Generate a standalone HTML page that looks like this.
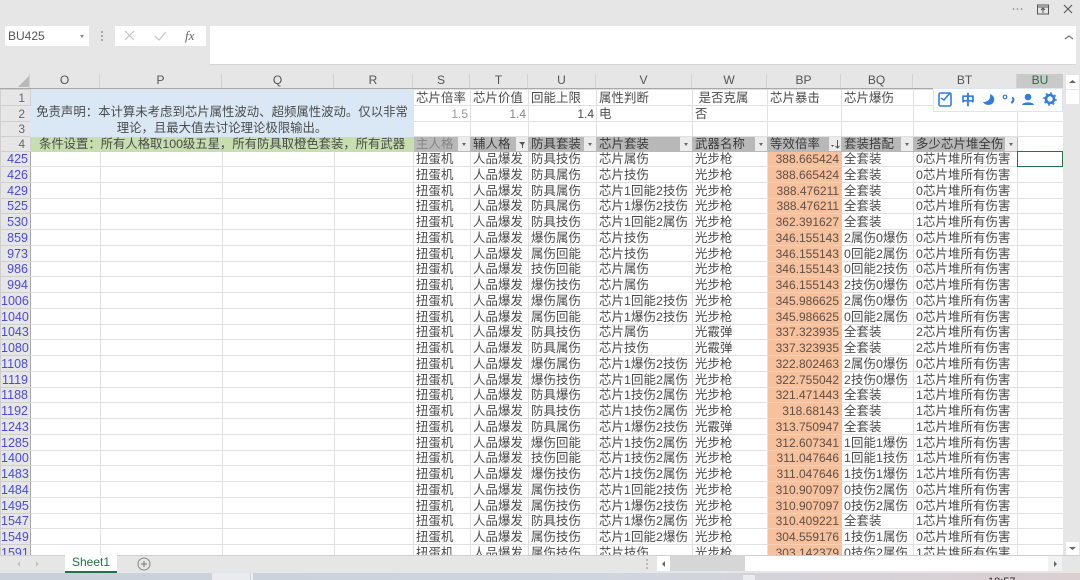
<!DOCTYPE html>
<html lang="zh"><head><meta charset="utf-8"><title>Sheet1</title>
<style>
html,body{margin:0;padding:0;width:1080px;height:580px;overflow:hidden;background:#fff}
body{position:relative;font-family:"Liberation Sans","Noto Sans CJK SC",sans-serif;color:#4a4a4a}
.a{position:absolute}
#top{left:0;top:0;width:1080px;height:74px;background:#e6e6e6}
#ch{left:0;top:74px;width:1063px;height:14px;background:#e6e6e6;border-bottom:1px solid #a8a8a8}
.c{position:absolute;top:0;height:14px;line-height:13px;font-size:12px;text-align:center;color:#555;border-right:1px solid #d2d2d2;box-sizing:border-box}
#wrap{left:0;top:89px;width:1063px;height:466px;overflow:hidden;background:#fff}
table{border-collapse:collapse;table-layout:fixed;width:1063px;font-size:12.4px;color:#4a4a4a}
td{height:16px;padding:1px 0 0 2px;box-sizing:border-box;border:1px solid #e0e0e0;white-space:nowrap;overflow:hidden;line-height:13px;position:relative;letter-spacing:.1px}
tr:nth-child(3) td,tr:nth-child(4) td,tr:nth-child(5) td,tr:nth-child(8) td,tr:nth-child(12) td,tr:nth-child(16) td,tr:nth-child(20) td,tr:nth-child(24) td,tr:nth-child(28) td{height:15px}
td.r{text-align:right;padding:1px 2px 0 0;font-size:12px;letter-spacing:0}
td.h{background:#e6e6e6;color:#666;text-align:right;padding:1px 5px 0 0;font-size:12px;letter-spacing:0;border-color:#cfcfcf}
td.b{color:#4b4bd6;padding:1px 2px 0 0;font-size:12.5px;border-right:1px solid #a8a8a8}
td.o{background:#f6c19c;text-align:right;padding:1px 2px 0 0;font-size:12px;letter-spacing:0;color:#5f5048;border-color:#f6c19c;border-top-color:#f8cfb2;border-bottom-color:#f8cfb2}
td.g{background:#b8b8b8;color:#3a3a3a;border-color:#b8b8b8}
.f{position:absolute;right:0;top:0;width:12px;height:14px;background:#ececec}
.f:after{content:"";position:absolute;left:4px;top:6px;border:2px solid transparent;border-top:3px solid #666;border-bottom:0}
.f.n:after{display:none}
.f svg{position:absolute;left:0;top:0}
#sel{left:1017px;top:151px;width:46px;height:16px;border:1.5px solid #217346;box-sizing:border-box}
#bu{left:1017px;top:74px;width:46px;height:15px;background:#c9c9c9;border-bottom:1px solid #217346;font-size:12px;line-height:13px;text-align:center;color:#2d6b49;box-sizing:border-box}
#bot{left:0;top:555px;width:1080px;height:18px;background:#e6e6e6;border-top:1px solid #d0d0d0;box-sizing:border-box}
#task{left:0;top:573px;width:1080px;height:7px;background:linear-gradient(90deg,#c9d0da 0,#cfd5df 55%,#d8d1d6 85%,#dccfd2 100%);overflow:hidden}
#ime{left:933px;top:88px;width:130px;height:24px;background:#fff;border:1px solid #dbe6f5;box-sizing:border-box}
</style></head><body>
<div class="a" id="top"></div>
<svg class="a" style="left:1008px;top:0" width="72" height="18" viewBox="0 0 72 18"><g fill="#777"><circle cx="5.500" cy="9" r=".8"/><circle cx="9.500" cy="9" r=".8"/><circle cx="13.500" cy="9" r=".8"/></g><g fill="none" stroke="#555"><rect x="29.500" y="5" width="11" height="9"/><path d="M29.500 7h11M35 13V8.500M33 10l2-2 2 2"/><path d="M56 5l8 8M64 5l-8 8" stroke-width="1.100"/></g></svg>
<div class="a" style="left:5px;top:26px;width:84px;height:20px;background:#fff;font-size:12px;line-height:20px;padding-left:3px;box-sizing:border-box;color:#555">BU425</div>
<div class="a" style="left:80px;top:35px;border:2px solid transparent;border-top:3px solid #888"></div>
<div class="a" style="left:101px;top:31px;width:1px;height:10px;border-left:2px dotted #aaa"></div>
<div class="a" style="left:115px;top:26px;width:91px;height:20px;background:#fff"></div>
<svg class="a" style="left:115px;top:26px" width="91" height="20" viewBox="0 0 91 20"><path d="M10 5l9 9M19 5l-9 9" stroke="#c4c4c4" fill="none" stroke-width="1.200"/><path d="M40 10l4 4 7-8" stroke="#c4c4c4" fill="none" stroke-width="1.200"/><text x="70" y="14" font-family="Liberation Serif" font-style="italic" font-size="13" fill="#666">fx</text></svg>
<div class="a" style="left:210px;top:26px;width:866px;height:39px;background:#fff;border-bottom:1px solid #d4d4d4;box-sizing:border-box"></div>
<svg class="a" style="left:1064px;top:33px" width="10" height="8"><path d="M1 6l4-3 4 3" fill="none" stroke="#777" stroke-width="1.300"/></svg>

<div class="a" id="ch">
<div class="c" style="left:0;width:30px"></div>
<svg class="a" style="left:17px;top:0" width="13" height="14"><path d="M12 2v11H1z" fill="#b9b9b9"/></svg>
<div class="c" style="left:30px;width:70px">O</div><div class="c" style="left:100px;width:122px">P</div><div class="c" style="left:222px;width:112px">Q</div><div class="c" style="left:334px;width:79px">R</div><div class="c" style="left:413px;width:57px">S</div><div class="c" style="left:470px;width:58px">T</div><div class="c" style="left:528px;width:68px">U</div><div class="c" style="left:596px;width:96px">V</div><div class="c" style="left:692px;width:75px">W</div><div class="c" style="left:767px;width:74px">BP</div><div class="c" style="left:841px;width:72px">BQ</div><div class="c" style="left:913px;width:104px">BT</div>
</div>
<div class="a" id="bu">BU</div>

<div class="a" id="wrap"><table>
<colgroup><col style="width:30px"><col style="width:70px"><col style="width:122px"><col style="width:112px"><col style="width:79px"><col style="width:57px"><col style="width:58px"><col style="width:68px"><col style="width:96px"><col style="width:75px"><col style="width:74px"><col style="width:72px"><col style="width:104px"><col style="width:46px"></colgroup>
<tr><td class="h">1</td><td colspan="4" rowspan="3" style="background:#dae8f5;text-align:center;vertical-align:bottom;padding:0 0 0 0;line-height:15.500px;letter-spacing:0;border-color:#dae8f5">免责声明：本计算未考虑到芯片属性波动、超频属性波动。仅以非常<br>理论，且最大值去讨论理论极限输出。</td><td>芯片倍率</td><td>芯片价值</td><td>回能上限</td><td>属性判断</td><td>&nbsp;是否克属</td><td>芯片暴击</td><td>芯片爆伤</td><td></td><td></td></tr>
<tr><td class="h">2</td><td class="r" style="color:#999">1.5</td><td class="r" style="color:#888">1.4</td><td class="r">1.4</td><td>电</td><td>否</td><td></td><td></td><td></td><td></td></tr>
<tr><td class="h">3</td><td></td><td></td><td></td><td></td><td></td><td></td><td></td><td></td><td></td></tr>
<tr><td class="h">4</td><td colspan="4" style="background:#c6deb0;text-align:center;padding:1px 0 0 0;letter-spacing:-.05px;border-color:#c6deb0">条件设置：所有人格取100级五星，所有防具取橙色套装，所有武器</td><td class="g" style="color:#858585">主人格<i class="f"></i></td><td class="g">辅人格<i class="f n"><svg width="12" height="14"><path d="M3 5h6L7 8v3l-1 0V8z" fill="#555"/></svg></i></td><td class="g">防具套装<i class="f"></i></td><td class="g">芯片套装<i class="f"></i></td><td class="g">武器名称<i class="f"></i></td><td class="g">等效倍率<i class="f n"><svg width="12" height="14"><path d="M2 8l1.500 2L5 8z" fill="#555"/><path d="M8.500 3v8M6.500 9l2 2 2-2" fill="none" stroke="#555"/></svg></i></td><td class="g">套装搭配<i class="f"></i></td><td class="g">多少芯片堆全伤<i class="f"></i></td><td></td></tr>
<tr><td class="h b">425</td><td></td><td></td><td></td><td></td><td>扭蛋机</td><td>人品爆发</td><td>防具技伤</td><td>芯片属伤</td><td>光步枪</td><td class="o">388.665424</td><td>全套装</td><td>0芯片堆所有伤害</td><td></td></tr>
<tr><td class="h b">426</td><td></td><td></td><td></td><td></td><td>扭蛋机</td><td>人品爆发</td><td>防具属伤</td><td>芯片技伤</td><td>光步枪</td><td class="o">388.665424</td><td>全套装</td><td>0芯片堆所有伤害</td><td></td></tr>
<tr><td class="h b">429</td><td></td><td></td><td></td><td></td><td>扭蛋机</td><td>人品爆发</td><td>防具属伤</td><td>芯片1回能2技伤</td><td>光步枪</td><td class="o">388.476211</td><td>全套装</td><td>0芯片堆所有伤害</td><td></td></tr>
<tr><td class="h b">525</td><td></td><td></td><td></td><td></td><td>扭蛋机</td><td>人品爆发</td><td>防具属伤</td><td>芯片1爆伤2技伤</td><td>光步枪</td><td class="o">388.476211</td><td>全套装</td><td>0芯片堆所有伤害</td><td></td></tr>
<tr><td class="h b">530</td><td></td><td></td><td></td><td></td><td>扭蛋机</td><td>人品爆发</td><td>防具技伤</td><td>芯片1回能2属伤</td><td>光步枪</td><td class="o">362.391627</td><td>全套装</td><td>1芯片堆所有伤害</td><td></td></tr>
<tr><td class="h b">859</td><td></td><td></td><td></td><td></td><td>扭蛋机</td><td>人品爆发</td><td>爆伤属伤</td><td>芯片技伤</td><td>光步枪</td><td class="o">346.155143</td><td>2属伤0爆伤</td><td>0芯片堆所有伤害</td><td></td></tr>
<tr><td class="h b">973</td><td></td><td></td><td></td><td></td><td>扭蛋机</td><td>人品爆发</td><td>属伤回能</td><td>芯片技伤</td><td>光步枪</td><td class="o">346.155143</td><td>0回能2属伤</td><td>0芯片堆所有伤害</td><td></td></tr>
<tr><td class="h b">986</td><td></td><td></td><td></td><td></td><td>扭蛋机</td><td>人品爆发</td><td>技伤回能</td><td>芯片属伤</td><td>光步枪</td><td class="o">346.155143</td><td>0回能2技伤</td><td>0芯片堆所有伤害</td><td></td></tr>
<tr><td class="h b">994</td><td></td><td></td><td></td><td></td><td>扭蛋机</td><td>人品爆发</td><td>爆伤技伤</td><td>芯片属伤</td><td>光步枪</td><td class="o">346.155143</td><td>2技伤0爆伤</td><td>0芯片堆所有伤害</td><td></td></tr>
<tr><td class="h b">1006</td><td></td><td></td><td></td><td></td><td>扭蛋机</td><td>人品爆发</td><td>爆伤属伤</td><td>芯片1回能2技伤</td><td>光步枪</td><td class="o">345.986625</td><td>2属伤0爆伤</td><td>0芯片堆所有伤害</td><td></td></tr>
<tr><td class="h b">1040</td><td></td><td></td><td></td><td></td><td>扭蛋机</td><td>人品爆发</td><td>属伤回能</td><td>芯片1爆伤2技伤</td><td>光步枪</td><td class="o">345.986625</td><td>0回能2属伤</td><td>0芯片堆所有伤害</td><td></td></tr>
<tr><td class="h b">1043</td><td></td><td></td><td></td><td></td><td>扭蛋机</td><td>人品爆发</td><td>防具技伤</td><td>芯片属伤</td><td>光霰弹</td><td class="o">337.323935</td><td>全套装</td><td>2芯片堆所有伤害</td><td></td></tr>
<tr><td class="h b">1080</td><td></td><td></td><td></td><td></td><td>扭蛋机</td><td>人品爆发</td><td>防具属伤</td><td>芯片技伤</td><td>光霰弹</td><td class="o">337.323935</td><td>全套装</td><td>2芯片堆所有伤害</td><td></td></tr>
<tr><td class="h b">1108</td><td></td><td></td><td></td><td></td><td>扭蛋机</td><td>人品爆发</td><td>爆伤属伤</td><td>芯片1爆伤2技伤</td><td>光步枪</td><td class="o">322.802463</td><td>2属伤0爆伤</td><td>0芯片堆所有伤害</td><td></td></tr>
<tr><td class="h b">1119</td><td></td><td></td><td></td><td></td><td>扭蛋机</td><td>人品爆发</td><td>爆伤技伤</td><td>芯片1回能2属伤</td><td>光步枪</td><td class="o">322.755042</td><td>2技伤0爆伤</td><td>1芯片堆所有伤害</td><td></td></tr>
<tr><td class="h b">1188</td><td></td><td></td><td></td><td></td><td>扭蛋机</td><td>人品爆发</td><td>防具爆伤</td><td>芯片1技伤2属伤</td><td>光步枪</td><td class="o">321.471443</td><td>全套装</td><td>1芯片堆所有伤害</td><td></td></tr>
<tr><td class="h b">1192</td><td></td><td></td><td></td><td></td><td>扭蛋机</td><td>人品爆发</td><td>防具技伤</td><td>芯片1技伤2属伤</td><td>光步枪</td><td class="o">318.68143</td><td>全套装</td><td>1芯片堆所有伤害</td><td></td></tr>
<tr><td class="h b">1243</td><td></td><td></td><td></td><td></td><td>扭蛋机</td><td>人品爆发</td><td>防具属伤</td><td>芯片1爆伤2技伤</td><td>光霰弹</td><td class="o">313.750947</td><td>全套装</td><td>1芯片堆所有伤害</td><td></td></tr>
<tr><td class="h b">1285</td><td></td><td></td><td></td><td></td><td>扭蛋机</td><td>人品爆发</td><td>爆伤回能</td><td>芯片1技伤2属伤</td><td>光步枪</td><td class="o">312.607341</td><td>1回能1爆伤</td><td>1芯片堆所有伤害</td><td></td></tr>
<tr><td class="h b">1400</td><td></td><td></td><td></td><td></td><td>扭蛋机</td><td>人品爆发</td><td>技伤回能</td><td>芯片1技伤2属伤</td><td>光步枪</td><td class="o">311.047646</td><td>1回能1技伤</td><td>1芯片堆所有伤害</td><td></td></tr>
<tr><td class="h b">1483</td><td></td><td></td><td></td><td></td><td>扭蛋机</td><td>人品爆发</td><td>爆伤技伤</td><td>芯片1技伤2属伤</td><td>光步枪</td><td class="o">311.047646</td><td>1技伤1爆伤</td><td>1芯片堆所有伤害</td><td></td></tr>
<tr><td class="h b">1484</td><td></td><td></td><td></td><td></td><td>扭蛋机</td><td>人品爆发</td><td>属伤技伤</td><td>芯片1回能2技伤</td><td>光步枪</td><td class="o">310.907097</td><td>0技伤2属伤</td><td>0芯片堆所有伤害</td><td></td></tr>
<tr><td class="h b">1495</td><td></td><td></td><td></td><td></td><td>扭蛋机</td><td>人品爆发</td><td>属伤技伤</td><td>芯片1爆伤2技伤</td><td>光步枪</td><td class="o">310.907097</td><td>0技伤2属伤</td><td>0芯片堆所有伤害</td><td></td></tr>
<tr><td class="h b">1547</td><td></td><td></td><td></td><td></td><td>扭蛋机</td><td>人品爆发</td><td>防具技伤</td><td>芯片1爆伤2属伤</td><td>光步枪</td><td class="o">310.409221</td><td>全套装</td><td>1芯片堆所有伤害</td><td></td></tr>
<tr><td class="h b">1549</td><td></td><td></td><td></td><td></td><td>扭蛋机</td><td>人品爆发</td><td>属伤技伤</td><td>芯片1回能2爆伤</td><td>光步枪</td><td class="o">304.559176</td><td>1技伤1属伤</td><td>0芯片堆所有伤害</td><td></td></tr>
<tr><td class="h b">1591</td><td></td><td></td><td></td><td></td><td>扭蛋机</td><td>人品爆发</td><td>属伤技伤</td><td>芯片技伤</td><td>光步枪</td><td class="o">303.142379</td><td>0技伤2属伤</td><td>1芯片堆所有伤害</td><td></td></tr>
</table></div>
<div class="a" id="sel"></div>

<div class="a" id="ime"></div>
<svg class="a" style="left:933px;top:88px" width="130" height="24" viewBox="0 0 130 24">
<g fill="none" stroke="#2f7de1" stroke-width="1.600"><rect x="6" y="5" width="12" height="13" rx="1.500"/><path d="M17 5l-6 7 -3-2"/></g>
<text x="28" y="17" font-size="14" font-weight="700" fill="#2f7de1" font-family="Noto Sans CJK SC,sans-serif">中</text>
<path d="M57 6c1 5-2 8-7 8 2 4 10 4 11-1 1-3-1-6-4-7z" fill="#2f7de1"/>
<circle cx="72" cy="9" r="1.800" fill="none" stroke="#2f7de1" stroke-width="1.200"/><path d="M79 10c2 0 2 3-.8 5" fill="none" stroke="#2f7de1" stroke-width="2"/>
<circle cx="95" cy="9" r="3.300" fill="#2f7de1"/><path d="M89 17c.5-3.500 11.500-3.500 12 0z" fill="#2f7de1"/>
<circle cx="117" cy="11" r="4" fill="none" stroke="#2f7de1" stroke-width="2.600"/><circle cx="117" cy="11" r="6" fill="none" stroke="#2f7de1" stroke-width="1.400" stroke-dasharray="2 2.700"/>
</svg>

<div class="a" style="left:1063px;top:74px;width:17px;height:481px;background:#e6e6e6"></div>
<div class="a" style="left:1066px;top:75px;width:13px;height:14px;background:#fff"></div>
<svg class="a" style="left:1067px;top:77px" width="11" height="9"><path d="M2 6l3.500-3 3.500 3z" fill="#666"/></svg>
<div class="a" style="left:1066px;top:90px;width:13px;height:14px;background:#fff"></div>
<div class="a" style="left:1066px;top:542px;width:13px;height:13px;background:#fff"></div>
<svg class="a" style="left:1067px;top:545px" width="11" height="9"><path d="M2 2l3.500 3 3.500-3z" fill="#666"/></svg>

<div class="a" id="bot"></div>
<svg class="a" style="left:14px;top:559px" width="30" height="10"><path d="M6 2l-3 3 3 3zM22 2l3 3-3 3z" fill="#c4c4c4"/></svg>
<div class="a" style="left:65px;top:555px;width:52px;height:18px;background:#fff;border-bottom:2px solid #217346;box-sizing:border-box;font-size:12px;line-height:15px;text-align:center;color:#217346">Sheet1</div>
<svg class="a" style="left:137px;top:557px" width="14" height="14"><circle cx="7" cy="7" r="6" fill="none" stroke="#888"/><path d="M7 4v6M4 7h6" stroke="#777"/></svg>
<div class="a" style="left:646px;top:559px;width:1px;height:10px;border-left:2px dotted #bbb"></div>
<div class="a" style="left:657px;top:556px;width:13px;height:15px;background:#fff"></div>
<svg class="a" style="left:657px;top:559px" width="13" height="10"><path d="M8 2l-3 3 3 3z" fill="#666"/></svg>
<div class="a" style="left:670px;top:556px;width:75px;height:15px;background:#d6d6d6"></div>
<div class="a" style="left:745px;top:556px;width:303px;height:15px;background:#fff"></div>
<div class="a" style="left:1048px;top:556px;width:14px;height:15px;background:#f2f2f2"></div>
<svg class="a" style="left:1048px;top:559px" width="14" height="10"><path d="M6 2l3 3-3 3z" fill="#666"/></svg>

<div class="a" id="task">
<div class="a" style="left:212px;top:0;width:38px;height:7px;background:#e9ebee"></div>
<div class="a" style="left:251px;top:0;width:2px;height:7px;background:#eef0f3"></div>
<div class="a" style="left:743px;top:2px;width:12px;height:5px;background:#e9ebee"></div>
<div class="a" style="left:988px;top:3px;font-size:11px;line-height:12px;color:#333">18:57</div>
</div>
</body></html>
